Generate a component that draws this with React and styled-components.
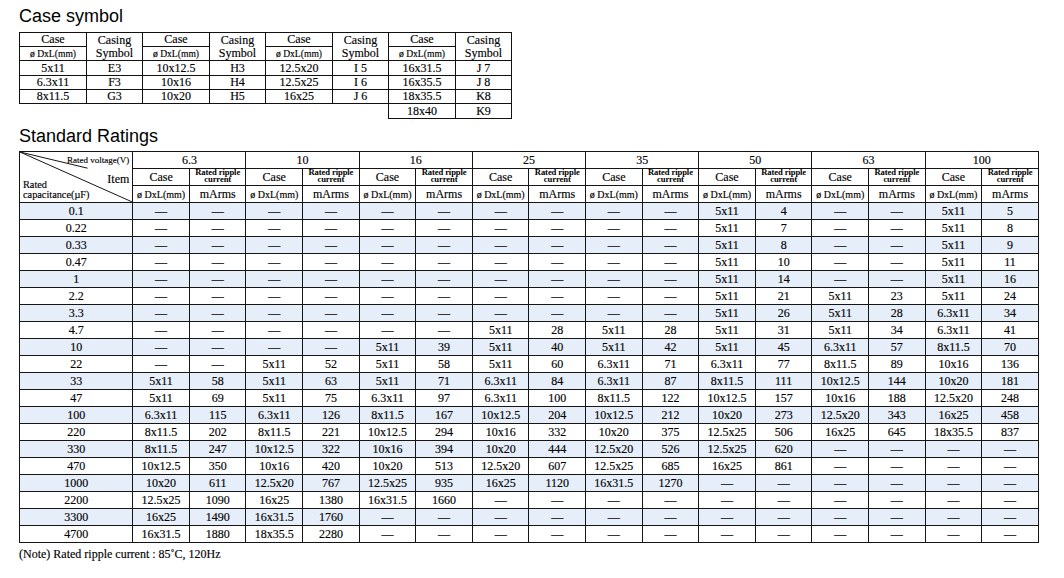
import React from 'react';
import styled, { createGlobalStyle } from 'styled-components';

const Global = createGlobalStyle`
  html, body { margin: 0; padding: 0; background: #fff; }
  body {
    font-family: "Liberation Serif", "Times New Roman", serif;
    color: #000;
    -webkit-text-stroke: 0.15px #000;
  }
`;

const Page = styled.div`
  width: 1064px;
  box-sizing: border-box;
  padding: 6px 0 0 19px;
`;

const Title = styled.h2`
  margin: ${p => p.$m};
  font-family: "Liberation Sans", Arial, sans-serif;
  font-weight: normal;
  font-size: 18px;
  line-height: 20px;
  color: #000;
  -webkit-text-stroke: 0;
`;

/* ---------- Case symbol table ---------- */
const SymbolTable = styled.table`
  border-collapse: collapse;
  table-layout: fixed;
  width: 492px;
  font-size: 12px;
`;

const SRow = styled.tr`
  height: ${p => p.$h}px;
`;

const SCell = styled.td`
  border: 1px solid #111;
  padding: 0;
  text-align: center;
  vertical-align: middle;
  line-height: ${p => (p.$lh ? p.$lh : 13)}px;
  font-size: ${p => (p.$fs ? p.$fs : 12)}px;
  white-space: nowrap;
`;

const SEmpty = styled.td`
  border: none;
  padding: 0;
`;

/* ---------- Ratings table ---------- */
const RatingsTable = styled.table`
  border-collapse: collapse;
  table-layout: fixed;
  width: 1020px;
  font-size: 12px;
`;

const Row = styled.tr`
  height: 17px;
  background: ${p => (p.$alt ? '#e6eef9' : '#fff')};
`;

const Cell = styled.td`
  border: 1px solid #151515;
  padding: 0;
  text-align: center;
  vertical-align: middle;
  font-size: 12px;
  line-height: 15px;
  white-space: nowrap;
  overflow: hidden;
`;

const HeadCell = styled.th`
  border: 1px solid #151515;
  padding: 0;
  text-align: center;
  vertical-align: middle;
  font-weight: normal;
  font-size: ${p => p.$fs || 12}px;
  line-height: 15px;
  white-space: nowrap;
  overflow: hidden;
`;

const RippleHead = styled.th`
  border: 1px solid #151515;
  padding: 0 0 2px;
  text-align: center;
  vertical-align: middle;
  font-weight: bold;
  font-size: 8.6px;
  line-height: 7px;
  letter-spacing: -0.1px;
  white-space: nowrap;
  -webkit-text-stroke: 0;
`;

const Corner = styled.th`
  border: 1px solid #151515;
  padding: 0;
  position: relative;
  font-weight: normal;
  background: #fff;
`;

const Diagonals = styled.svg`
  position: absolute;
  inset: 0;
  width: 100%;
  height: 100%;
`;

const CornerLabel = styled.span`
  position: absolute;
  white-space: nowrap;
  ${p => (p.$right ? 'right: 3px;' : 'left: 3px;')}
  top: ${p => p.$top}px;
  font-size: ${p => p.$fs}px;
  line-height: ${p => p.$lh}px;
`;

const Note = styled.p`
  margin: 4px 0 0;
  font-size: 12px;
  line-height: 14px;
`;

const symbolRows = [
  ['5x11', 'E3', '10x12.5', 'H3', '12.5x20', 'I 5', '16x31.5', 'J 7'],
  ['6.3x11', 'F3', '10x16', 'H4', '12.5x25', 'I 6', '16x35.5', 'J 8'],
  ['8x11.5', 'G3', '10x20', 'H5', '16x25', 'J 6', '18x35.5', 'K8'],
];
const symbolHeights = [15, 14, 14];

const voltages = ['6.3', '10', '16', '25', '35', '50', '63', '100'];
const D = null;
const ratings = [
  ['0.1', D, D, D, D, D, ['5x11', 4], D, ['5x11', 5]],
  ['0.22', D, D, D, D, D, ['5x11', 7], D, ['5x11', 8]],
  ['0.33', D, D, D, D, D, ['5x11', 8], D, ['5x11', 9]],
  ['0.47', D, D, D, D, D, ['5x11', 10], D, ['5x11', 11]],
  ['1', D, D, D, D, D, ['5x11', 14], D, ['5x11', 16]],
  ['2.2', D, D, D, D, D, ['5x11', 21], ['5x11', 23], ['5x11', 24]],
  ['3.3', D, D, D, D, D, ['5x11', 26], ['5x11', 28], ['6.3x11', 34]],
  ['4.7', D, D, D, ['5x11', 28], ['5x11', 28], ['5x11', 31], ['5x11', 34], ['6.3x11', 41]],
  ['10', D, D, ['5x11', 39], ['5x11', 40], ['5x11', 42], ['5x11', 45], ['6.3x11', 57], ['8x11.5', 70]],
  ['22', D, ['5x11', 52], ['5x11', 58], ['5x11', 60], ['6.3x11', 71], ['6.3x11', 77], ['8x11.5', 89], ['10x16', 136]],
  ['33', ['5x11', 58], ['5x11', 63], ['5x11', 71], ['6.3x11', 84], ['6.3x11', 87], ['8x11.5', 111], ['10x12.5', 144], ['10x20', 181]],
  ['47', ['5x11', 69], ['5x11', 75], ['6.3x11', 97], ['6.3x11', 100], ['8x11.5', 122], ['10x12.5', 157], ['10x16', 188], ['12.5x20', 248]],
  ['100', ['6.3x11', 115], ['6.3x11', 126], ['8x11.5', 167], ['10x12.5', 204], ['10x12.5', 212], ['10x20', 273], ['12.5x20', 343], ['16x25', 458]],
  ['220', ['8x11.5', 202], ['8x11.5', 221], ['10x12.5', 294], ['10x16', 332], ['10x20', 375], ['12.5x25', 506], ['16x25', 645], ['18x35.5', 837]],
  ['330', ['8x11.5', 247], ['10x12.5', 322], ['10x16', 394], ['10x20', 444], ['12.5x20', 526], ['12.5x25', 620], D, D],
  ['470', ['10x12.5', 350], ['10x16', 420], ['10x20', 513], ['12.5x20', 607], ['12.5x25', 685], ['16x25', 861], D, D],
  ['1000', ['10x20', 611], ['12.5x20', 767], ['12.5x25', 935], ['16x25', 1120], ['16x31.5', 1270], D, D, D],
  ['2200', ['12.5x25', 1090], ['16x25', 1380], ['16x31.5', 1660], D, D, D, D, D],
  ['3300', ['16x25', 1490], ['16x31.5', 1760], D, D, D, D, D, D],
  ['4700', ['16x31.5', 1880], ['18x35.5', 2280], D, D, D, D, D, D],
];

const DASH = '\u2014';

function CaseSymbolTable() {
  return (
    <SymbolTable>
      <colgroup>
        {[0, 1, 2, 3].map(i => (
          <React.Fragment key={i}>
            <col style={{ width: 67 }} />
            <col style={{ width: 56 }} />
          </React.Fragment>
        ))}
      </colgroup>
      <tbody>
        <SRow $h={13}>
          {[0, 1, 2, 3].map(i => (
            <React.Fragment key={i}>
              <SCell>Case</SCell>
              <SCell rowSpan={2} $lh={12.4}>Casing<br />Symbol</SCell>
            </React.Fragment>
          ))}
        </SRow>
        <SRow $h={14}>
          {[0, 1, 2, 3].map(i => (
            <SCell key={i} $fs={9.6}>ø DxL(mm)</SCell>
          ))}
        </SRow>
        {symbolRows.map((r, ri) => (
          <SRow key={ri} $h={symbolHeights[ri]}>
            {r.map((v, ci) => (
              <SCell key={ci}>{v}</SCell>
            ))}
          </SRow>
        ))}
        <SRow $h={15}>
          {[0, 1, 2, 3, 4, 5].map(i => <SEmpty key={i} />)}
          <SCell>18x40</SCell>
          <SCell>K9</SCell>
        </SRow>
      </tbody>
    </SymbolTable>
  );
}

function StandardRatingsTable() {
  return (
    <RatingsTable>
      <colgroup>
        <col style={{ width: 113.3 }} />
        {Array.from({ length: 16 }).map((_, i) => <col key={i} />)}
      </colgroup>
      <thead>
        <Row>
          <Corner rowSpan={3}>
            <Diagonals viewBox="0 0 113 51" preserveAspectRatio="none">
              <line x1="0" y1="0" x2="68" y2="16.5" stroke="#151515" strokeWidth="1" vectorEffect="non-scaling-stroke" />
              <line x1="0" y1="0" x2="113" y2="51" stroke="#151515" strokeWidth="1" vectorEffect="non-scaling-stroke" />
            </Diagonals>
            <CornerLabel $right $top={3} $fs={9} $lh={11}>Rated voltage(V)</CornerLabel>
            <CornerLabel $right $top={20} $fs={12} $lh={14}>Item</CornerLabel>
            <CornerLabel $top={26.5} $fs={10.3} $lh={11}>Rated</CornerLabel>
            <CornerLabel $top={37} $fs={10.3} $lh={11}>capacitance(µF)</CornerLabel>
          </Corner>
          {voltages.map(v => (
            <HeadCell key={v} colSpan={2}>{v}</HeadCell>
          ))}
        </Row>
        <Row>
          {voltages.map(v => (
            <React.Fragment key={v}>
              <HeadCell>Case</HeadCell>
              <RippleHead>Rated ripple<br />current</RippleHead>
            </React.Fragment>
          ))}
        </Row>
        <Row>
          {voltages.map(v => (
            <React.Fragment key={v}>
              <HeadCell $fs={10}>ø DxL(mm)</HeadCell>
              <HeadCell>mArms</HeadCell>
            </React.Fragment>
          ))}
        </Row>
      </thead>
      <tbody>
        {ratings.map((r, ri) => (
          <Row key={r[0]} $alt={ri % 2 === 0}>
            <Cell>{r[0]}</Cell>
            {r.slice(1).map((c, ci) => (
              <React.Fragment key={ci}>
                <Cell>{c ? c[0] : DASH}</Cell>
                <Cell>{c ? c[1] : DASH}</Cell>
              </React.Fragment>
            ))}
          </Row>
        ))}
      </tbody>
    </RatingsTable>
  );
}

export default function App() {
  return (
    <>
      <Global />
      <Page>
        <Title $m="0 0 6px">Case symbol</Title>
        <CaseSymbolTable />
        <Title $m="7px 0 5px">Standard Ratings</Title>
        <StandardRatingsTable />
        <Note>(Note) Rated ripple current : 85˚C, 120Hz</Note>
      </Page>
    </>
  );
}
